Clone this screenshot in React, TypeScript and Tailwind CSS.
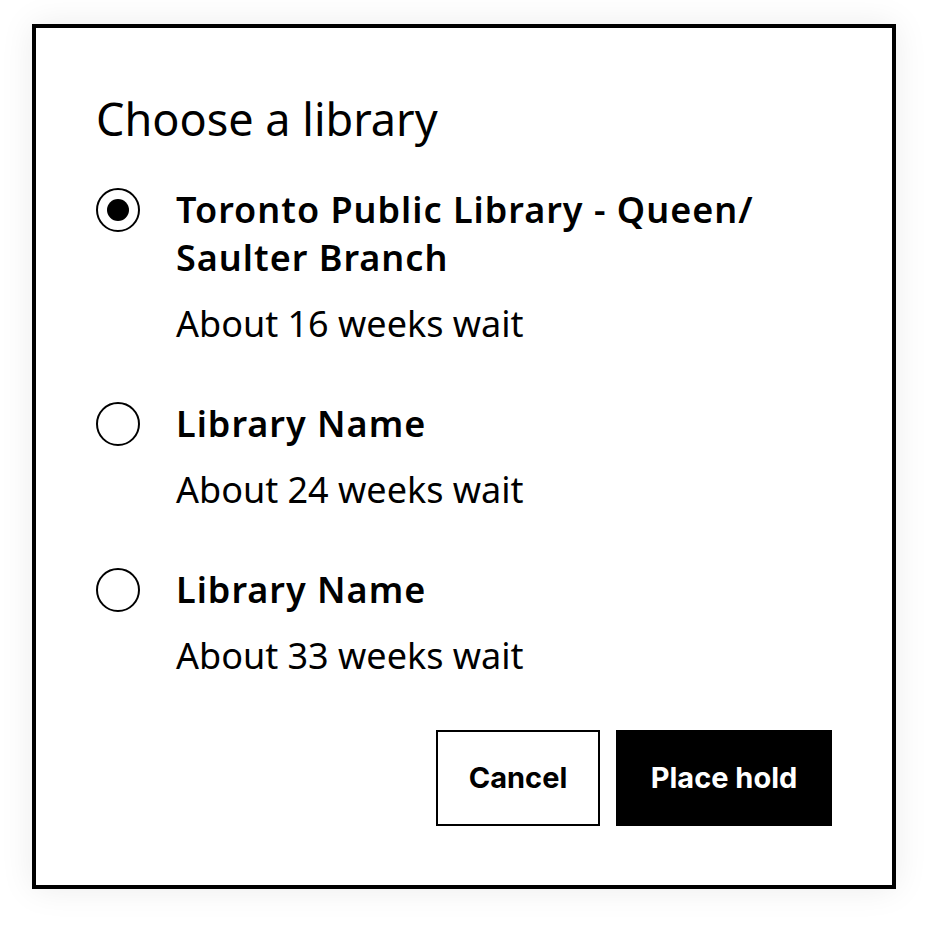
import React, { useState } from "react";

const options = [
  { id: "queen", name: "Toronto Public Library - Queen/ Saulter Branch", wait: "About 16 weeks wait" },
  { id: "lib2", name: "Library Name", wait: "About 24 weeks wait" },
  { id: "lib3", name: "Library Name", wait: "About 33 weeks wait" },
];

export default function App() {
  const [selected, setSelected] = useState("queen");

  return (
    <div className="min-h-[930px] bg-white pl-8 pt-6" style={{ fontFamily: "'Noto Sans', Lato, sans-serif" }}>
      <div className="w-[864px] h-[865px] border-4 border-black bg-white px-[60px] pt-[60px] shadow-[0_0_32px_rgba(0,0,0,0.08)]">
        <h1 className="text-[45px] leading-[62px] text-black">Choose a library</h1>

        <div className="mt-9 flex flex-col gap-[52px]">
          {options.map((o) => (
            <label key={o.id} className="flex gap-9 cursor-pointer" onClick={() => setSelected(o.id)}>
              <div className="h-12 flex items-center shrink-0">
                <div className="w-11 h-11 rounded-full border-2 border-black flex items-center justify-center">
                  {selected === o.id && <div className="w-[22px] h-[22px] rounded-full bg-black" />}
                </div>
              </div>
              <div className="flex-1">
                <p className="text-[36px] leading-[48px] font-semibold tracking-[1px] text-black">{o.name}</p>
                <p className="mt-[18px] text-[36px] leading-[48px] text-black">{o.wait}</p>
              </div>
            </label>
          ))}
        </div>

        <div className="mt-[50px] flex justify-end gap-4" style={{ fontFamily: "Inter, sans-serif" }}>
          <button className="w-[164px] h-24 border-2 border-black bg-white text-[29px] font-bold text-black">
            Cancel
          </button>
          <button className="w-[216px] h-24 bg-black text-[29px] font-bold text-white">
            Place hold
          </button>
        </div>
      </div>
    </div>
  );
}
